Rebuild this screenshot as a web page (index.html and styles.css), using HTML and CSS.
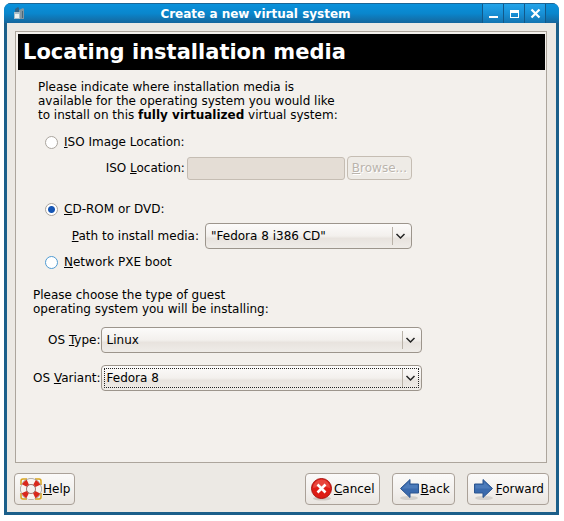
FILE: index.html
```html
<!DOCTYPE html>
<html lang="en">
<head>
<meta charset="utf-8">
<title>Create a new virtual system</title>
<link rel="stylesheet" href="styles.css">
</head>
<body>
<main class="window">
  <header class="titlebar">
    <svg class="app-icon" width="12" height="14" viewBox="0 0 12 14" aria-hidden="true">
      <path d="M2 2l3-2 1 1v11H2z" fill="#31658a"/>
      <path d="M6 3l4-2 1 1v10H6z" fill="#7f95a2"/>
      <path d="M1 5h6v7H1z" fill="#a9bcc7"/>
      <path d="M2 7h4v4H2z" fill="#eef1f0"/>
      <path d="M9 4h1v7H9z" fill="#4b6879"/>
    </svg>
    <h1 class="title">Create a new virtual system</h1>
    <div class="window-controls">
      <button class="control" type="button" aria-label="Minimize"><svg width="11" height="11" viewBox="0 0 11 11"><path d="M1 8h9v2H1z" fill="#fff"/></svg></button>
      <button class="control" type="button" aria-label="Maximize"><svg width="11" height="11" viewBox="0 0 11 11"><path d="M1 2h9v8H1zM2 5v4h7V5z" fill="#fff" fill-rule="evenodd"/></svg></button>
      <button class="control" type="button" aria-label="Close"><svg width="11" height="11" viewBox="0 0 11 11"><path d="M1.500 1.500l8 8M9.500 1.500l-8 8" stroke="#fff" stroke-width="2.200"/></svg></button>
    </div>
  </header>
  <form class="dialog">
    <section class="panel">
      <h2 class="heading">Locating installation media</h2>
      <div class="media">
        <p class="text">Please indicate where installation media is<br>available for the operating system you would like<br>to install on this <b>fully virtualized</b> virtual system:</p>
        <div class="choices">
          <label class="choice"><input class="radio radio-plain" type="radio" name="media"><span><u>I</u>SO Image Location:</span></label>
          <div class="row row-iso">
            <label for="iso">ISO <u>L</u>ocation:</label>
            <input class="entry" id="iso" type="text" disabled>
            <button class="button browse" type="button" disabled><u>B</u>rowse...</button>
          </div>
          <label class="choice"><input class="radio radio-plain" type="radio" name="media" checked><span><u>C</u>D-ROM or DVD:</span></label>
          <div class="row row-path">
            <label for="path"><u>P</u>ath to install media:</label>
            <span class="combo">
              <select class="select" id="path"><option>"Fedora 8 i386 CD"</option></select>
              <svg class="arrow" width="20" height="18" viewBox="0 0 20 18" aria-hidden="true"><path d="M.5 0v18" stroke="#b9b2a8"/><path d="M4.500 7l4 4 4-4" fill="none" stroke="#222" stroke-width="1.500"/></svg>
            </span>
          </div>
          <label class="choice"><input class="radio" type="radio" name="media"><span><u>N</u>etwork PXE boot</span></label>
        </div>
      </div>
      <div class="guest">
        <p class="text">Please choose the type of guest<br>operating system you will be installing:</p>
        <div class="os-grid">
          <label for="os-type">OS <u>T</u>ype:</label>
          <span class="combo">
            <select class="select" id="os-type"><option>Linux</option></select>
            <svg class="arrow" width="20" height="18" viewBox="0 0 20 18" aria-hidden="true"><path d="M.5 0v18" stroke="#b9b2a8"/><path d="M4.500 7l4 4 4-4" fill="none" stroke="#222" stroke-width="1.500"/></svg>
          </span>
          <label for="os-variant">OS <u>V</u>ariant:</label>
          <span class="combo">
            <select class="select select-active" id="os-variant"><option>Fedora 8</option></select>
            <svg class="arrow" width="20" height="18" viewBox="0 0 20 18" aria-hidden="true"><path d="M.5 0v18" stroke="#b9b2a8"/><path d="M4.500 7l4 4 4-4" fill="none" stroke="#222" stroke-width="1.500"/></svg>
          </span>
        </div>
      </div>
    </section>
    <footer class="actions">
      <button class="button action help" type="button">
        <svg width="24" height="24" viewBox="0 0 24 24" aria-hidden="true">
          <path d="M2 8V4q0-2 2-2h4M16 2h4q2 0 2 2v4M22 16v4q0 2-2 2h-4M8 22H4q-2 0-2-2v-4" fill="none" stroke="#d9a51e" stroke-width="1.500"/>
          <circle cx="12" cy="12" r="7.500" fill="none" stroke="#8c8580" stroke-width="6.500"/>
          <circle cx="12" cy="12" r="7.500" fill="none" stroke="#f7f4f0" stroke-width="5.500"/>
          <circle cx="12" cy="12" r="7.500" fill="none" stroke="#d9281c" stroke-width="5.500" stroke-dasharray="4.900 6.881" stroke-dashoffset="-3.440"/>
          <circle cx="12" cy="12" r="4.500" fill="none" stroke="#9a6a64" stroke-width=".8"/>
        </svg>
        <span><u>H</u>elp</span>
      </button>
      <button class="button action" type="button">
        <svg width="24" height="24" viewBox="0 0 24 24" aria-hidden="true">
          <ellipse cx="12" cy="21.500" rx="9" ry="2" fill="#cfcac4"/>
          <circle cx="11.500" cy="11.500" r="10" fill="#de1c15" stroke="#a81410"/>
          <path d="M3 11a8.500 8.500 0 0 1 17 0q-8-3-17 0z" fill="#e8453c"/>
          <path d="M7.500 7.500l8 8M15.500 7.500l-8 8" stroke="#fff" stroke-width="2.600"/>
        </svg>
        <span><u>C</u>ancel</span>
      </button>
      <button class="button action" type="button">
        <svg width="24" height="24" viewBox="0 0 24 24" aria-hidden="true">
          <ellipse cx="12" cy="21" rx="9" ry="2" fill="#d3d0cc"/>
          <path d="M3.500 11.500L13 2.500v4.500h8.500v9H13v4.500z" fill="#3a6aad" stroke="#2b5590" stroke-linejoin="round"/>
          <path d="M5 11.500l7-6.500v3h8.500v3.500z" fill="#4c7bba"/>
        </svg>
        <span><u>B</u>ack</span>
      </button>
      <button class="button action" type="button">
        <svg width="24" height="24" viewBox="0 0 24 24" aria-hidden="true">
          <ellipse cx="12" cy="21" rx="9" ry="2" fill="#d3d0cc"/>
          <path d="M20.500 11.500L11 2.500v4.500H2.500v9H11v4.500z" fill="#3a6aad" stroke="#2b5590" stroke-linejoin="round"/>
          <path d="M19 11.500L12 5v3H3.500v3.500z" fill="#4c7bba"/>
        </svg>
        <span><u>F</u>orward</span>
      </button>
    </footer>
  </form>
</main>
</body>
</html>
```
FILE: styles.css
```css
* {
  box-sizing: border-box;
}

body {
  margin: 0;
  background: #fff;
  color: #000;
  font: 12px/14px "DejaVu Sans", sans-serif;
}

.window {
  display: flex;
  flex-direction: column;
  min-height: calc(100vh - 9px);
  margin: 3px 5px 6px 4px;
  background: #1b5f8a;
  border-radius: 7px 7px 0 0;
  overflow: hidden;
}

.titlebar {
  display: flex;
  align-items: center;
  height: 20px;
  padding: 0 13px 0 9px;
  border-top: 1px solid #1a6595;
  background: linear-gradient(#0a92dc, #0a86cc 50%, #16669c);
}

.title {
  flex: 1;
  margin: 0;
  padding-left: 4px;
  color: #fff;
  font-size: 12px;
  text-align: center;
}

.window-controls {
  display: flex;
  align-self: stretch;
  border-right: 1px solid #12598a;
}

.control {
  display: flex;
  align-items: center;
  justify-content: center;
  width: 21px;
  padding: 0;
  border: 0;
  border-left: 1px solid #12598a;
  background: linear-gradient(#22a4ea, #1890d6 50%, #1474b0);
}

.dialog {
  display: flex;
  flex: 1;
  flex-direction: column;
  margin: 0 3px 3px;
  padding: 8px 7px 7px 7px;
  background: #ece9e4;
}

.panel {
  flex: 1;
  margin: 0 2px 0 1px;
  padding: 2px 1px 2px 2px;
  border: 1px solid #aca59c;
  background: #f3f0ec;
}

.heading {
  margin: 0;
  padding: 5px;
  background: #000;
  color: #fff;
  font-size: 21px;
  line-height: 26px;
}

.text {
  margin: 0;
}

.media {
  width: fit-content;
  margin: 10px 20px 0;
}

.choices {
  width: 374px;
  margin-top: 13px;
}

.choice {
  display: flex;
  align-items: center;
  gap: 6px;
  padding-left: 7px;
}

.radio {
  width: 13px;
  height: 13px;
  margin: 0;
  border: 1px solid #4f9bd2;
  border-radius: 50%;
  appearance: none;
  background: #fff;
}

.radio-plain {
  border-color: #aaa59e;
}

.radio:checked {
  background: radial-gradient(circle, #1656b4 3px, #fff 4px);
}

.row {
  display: flex;
  align-items: center;
  justify-content: flex-end;
}

.row-iso {
  gap: 2px;
  margin: 7px 0 22px;
}

.row-path {
  gap: 6px;
  margin: 7px 0 6px;
}

.entry {
  width: 158px;
  height: 23px;
  padding: 0 4px;
  border: 1px solid #c5bdb3;
  border-radius: 3px;
  background: #e4ddd5;
  font: inherit;
}

.button {
  border: 1px solid #aaa198;
  border-radius: 4px;
  background: linear-gradient(#fbfaf9, #f2efec 60%, #e9e5e0);
  color: #000;
  font: inherit;
}

.browse {
  height: 24px;
  padding: 0 4px;
  border-color: #c5bdb3;
  background: #eeebe6;
  color: #bab4ac;
  text-shadow: 1px 1px #fff;
}

.combo {
  display: grid;
  align-items: center;
}

.combo > * {
  grid-area: 1 / 1;
}

.row-path .combo {
  width: 207px;
}

.select {
  width: 100%;
  height: 26px;
  padding: 0 24px 0 5px;
  border: 1px solid #9c958c;
  border-radius: 4px;
  appearance: none;
  background: linear-gradient(#fcfbfa, #f3f0ed 50%, #e8e3de 60%, #efece8);
  color: #000;
  font: inherit;
}

.select-active {
  outline: 1px dotted #222;
  outline-offset: -4px;
}

.arrow {
  justify-self: end;
  pointer-events: none;
}

.guest {
  margin: 19px 15px 0;
}

.os-grid {
  display: grid;
  grid-template-columns: auto 321px;
  align-items: center;
  justify-content: start;
  row-gap: 12px;
  margin-top: 11px;
}

.os-grid label {
  text-align: right;
}

.actions {
  display: flex;
  gap: 12px;
  margin-top: 10px;
}

.action {
  display: flex;
  align-items: center;
  height: 32px;
  padding: 0 4px;
}

.help {
  margin-right: auto;
}
```
